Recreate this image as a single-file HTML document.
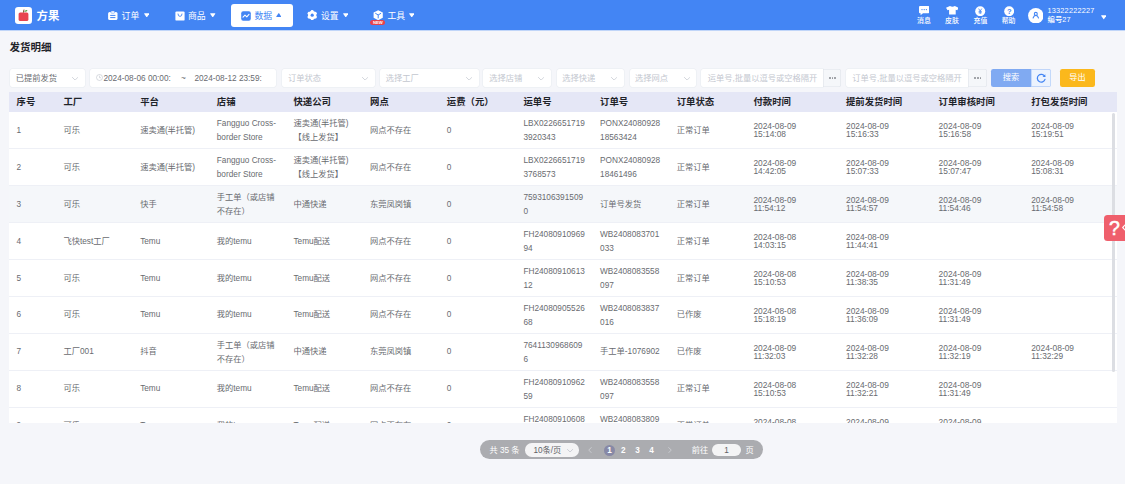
<!DOCTYPE html>
<html lang="zh-CN">
<head>
<meta charset="utf-8">
<title>发货明细</title>
<style>
*{box-sizing:border-box;margin:0;padding:0}
html,body{width:1125px;height:484px;overflow:hidden;background:#f5f6fa}
body{position:relative;font-family:"Liberation Sans","Noto Sans CJK SC",sans-serif;color:#606266;font-size:8.2px}
.abs{position:absolute;white-space:nowrap}
#hdr{position:absolute;left:0;top:0;width:1125px;height:31px;background:#4385f4;border-bottom:1px solid #c0d5f8}
.nav{position:absolute;top:10.8px;font-weight:400;height:11px;line-height:11px;font-size:8.8px;color:#fff;white-space:nowrap}
.nav.act{color:#4385f4}
.tri{position:absolute;top:13px;width:5.5px;height:4.4px}
#tab{position:absolute;left:231px;top:3.5px;width:62px;height:23.2px;background:#fff;border-radius:3px}
.ric{position:absolute;top:16.5px;font-weight:500;height:8px;line-height:8px;font-size:6.9px;color:#fff;white-space:nowrap;text-align:center}
.usr{position:absolute;left:1047.5px;font-size:7px;line-height:8px;color:#fff;white-space:nowrap}
#title{position:absolute;left:9.4px;top:40.5px;font-size:10.5px;line-height:13px;font-weight:bold;color:#1f2329;white-space:nowrap}
.inp{position:absolute;top:69px;height:18px;background:#fff;box-shadow:0 0 0 0.5px #e8ebf0;border-radius:2.3px}
.ft{position:absolute;top:69.2px;height:17.8px;line-height:19.2px;font-size:8.25px;color:#c3c7cf;white-space:nowrap}
.ft.v{color:#696b70}
.chev{position:absolute;top:76.6px;width:6.2px;height:3.6px}
.more{position:absolute;top:69px;height:18px;background:#f5f7fa;box-shadow:inset 0 0 0 0.6px #dfe3ea;border-radius:0 2.3px 2.3px 0}
.more i{position:absolute;top:8.2px;width:1.6px;height:1.6px;border-radius:50%;background:#909399}
.btn{position:absolute;top:69px;height:18px;line-height:18.6px;font-size:8.2px;color:#fff;text-align:center;white-space:nowrap}
.tbl{position:absolute;left:9.4px;top:92.2px;width:1107.8px;height:330.8px;overflow:hidden;background:#fff}
table{border-collapse:collapse;table-layout:fixed;width:1107.8px}
th{height:19.35px;background:#e5e7f6;color:#1f2329;font-size:9.4px;font-weight:bold;text-align:left;padding:0 0 0 7.2px;white-space:nowrap;line-height:12px;vertical-align:middle}
td{height:36.94px;padding:1.2px 0 0 7.2px;font-size:8.25px;line-height:13.6px;color:#696b70;vertical-align:middle;white-space:nowrap;border-bottom:0.6px solid #eef0f6}
.l2{position:relative;top:0.8px}
td.dt{line-height:8.35px;font-size:8.4px;padding-top:1.0px}
tr.hl td{background:#f5f7fa}
#sbt{position:absolute;left:1112.3px;top:113.2px;width:3.1px;height:258.8px;background:#dcdee3;border-radius:1.6px}
#pg{position:absolute;left:480.3px;top:440.4px;width:282.4px;height:18.9px;border-radius:9.45px;background:#abacb0;color:#fff;font-size:8.2px;line-height:19.6px}
#pg span{position:absolute;top:0.8px;white-space:nowrap}
#help{position:absolute;left:1104.4px;top:214.6px;width:24px;height:26px;background:#ef5f6c;border-radius:3.5px 0 0 3.5px}
</style>
</head>
<body>
<div id="hdr">
  <!-- logo -->
  <svg class="abs" style="left:14.5px;top:6.6px" width="17" height="17" viewBox="0 0 17 17"><rect width="17" height="17" rx="3.2" fill="#fff"/><rect x="3.6" y="5.4" width="9.8" height="8.6" rx="1.6" fill="#e8454f"/><path d="M8.4 5.6 L9 2.6" stroke="#7a4a2a" stroke-width="1" fill="none"/><path d="M9 4.6 Q10.6 2.4 12.6 3.2 Q11.4 5.2 9 4.6Z" fill="#5aa845"/></svg>
  <div class="abs" style="left:36.4px;top:8.6px;font-size:11.4px;line-height:14px;font-weight:bold;color:#fff;letter-spacing:0.3px">方果</div>

  <!-- 订单 -->
  <svg class="abs" style="left:108.2px;top:10.8px" width="9.6" height="9" viewBox="0 0 9.6 9"><rect x="0.1" y="1" width="9.4" height="8" rx="1.5" fill="#fff"/><rect x="2.9" y="0" width="3.8" height="2.2" rx="0.8" fill="#fff" stroke="#4385f4" stroke-width="0.5"/><rect x="2.2" y="3.9" width="5.2" height="1" fill="#4385f4"/><rect x="2.2" y="6.1" width="5.2" height="1" fill="#4385f4"/></svg>
  <div class="nav" style="left:121.6px">订单</div><svg class="tri" style="left:143.8px" viewBox="0 0 5.2 3.8" preserveAspectRatio="none"><path d="M0.5 0.3 H4.7 Q5.2 0.3 4.9 0.8 L2.9 3.5 Q2.6 3.8 2.3 3.5 L0.3 0.8 Q0 0.3 0.5 0.3Z" fill="#fff"/></svg>
  <!-- 商品 -->
  <svg class="abs" style="left:174.6px;top:10.8px" width="10" height="10" viewBox="0 0 10 10"><rect x="0.4" y="0.4" width="9.2" height="9.2" rx="1.2" fill="#fff"/><path d="M3 2.6 Q3 5.4 5 5.4 Q7 5.4 7 2.6" stroke="#4385f4" stroke-width="0.9" fill="none"/></svg>
  <div class="nav" style="left:188px">商品</div><svg class="tri" style="left:210px" viewBox="0 0 5.2 3.8" preserveAspectRatio="none"><path d="M0.5 0.3 H4.7 Q5.2 0.3 4.9 0.8 L2.9 3.5 Q2.6 3.8 2.3 3.5 L0.3 0.8 Q0 0.3 0.5 0.3Z" fill="#fff"/></svg>
  <!-- 数据 -->
  <div id="tab"></div>
  <svg class="abs" style="left:240.8px;top:10.7px" width="10" height="10" viewBox="0 0 10 10"><rect x="0.2" y="0.2" width="9.6" height="9.6" rx="2" fill="#4385f4"/><path d="M2 6.2 L4 4.2 L5.8 5.8 L8 3.4" stroke="#fff" stroke-width="1.1" fill="none" stroke-linecap="round" stroke-linejoin="round"/></svg>
  <div class="nav act" style="left:254.5px">数据</div><svg class="tri" style="left:275.6px;top:12.6px" viewBox="0 0 5.2 3.8" preserveAspectRatio="none"><path d="M0.5 3.5 H4.7 Q5.2 3.5 4.9 3 L2.9 0.3 Q2.6 0 2.3 0.3 L0.3 3 Q0 3.5 0.5 3.5Z" fill="#4385f4"/></svg>
  <!-- 设置 -->
  <svg class="abs" style="left:306.6px;top:10px" width="10.4" height="10.4" viewBox="0 0 10.4 10.4"><circle cx="5.2" cy="5.2" r="4.1" fill="#fff"/><g fill="#fff"><rect x="3.8" y="0.1" width="2.8" height="10.2" rx="1.1" transform="rotate(0 5.2 5.2)"/><rect x="3.8" y="0.1" width="2.8" height="10.2" rx="1.1" transform="rotate(60 5.2 5.2)"/><rect x="3.8" y="0.1" width="2.8" height="10.2" rx="1.1" transform="rotate(120 5.2 5.2)"/></g><circle cx="5.2" cy="5.2" r="1.6" fill="#4385f4"/></svg>
  <div class="nav" style="left:320.9px">设置</div><svg class="tri" style="left:342.8px" viewBox="0 0 5.2 3.8" preserveAspectRatio="none"><path d="M0.5 0.3 H4.7 Q5.2 0.3 4.9 0.8 L2.9 3.5 Q2.6 3.8 2.3 3.5 L0.3 0.8 Q0 0.3 0.5 0.3Z" fill="#fff"/></svg>
  <!-- 工具 -->
  <svg class="abs" style="left:372.8px;top:9.6px" width="10.4" height="10.4" viewBox="0 0 10.4 10.4"><path d="M5.2 0.2 L9.8 2.6 L9.8 7.8 L5.2 10.2 L0.6 7.8 L0.6 2.6Z" fill="#fff"/><path d="M2.6 3.4 L5.2 5 L7.8 3.4 M5.2 5 L5.2 8" stroke="#4385f4" stroke-width="1" fill="none" stroke-linecap="round"/></svg>
  <div class="abs" style="left:370.4px;top:19.6px;width:14.9px;height:5.8px;border-radius:2.9px;background:#e8404a;color:#fff;font-size:4.2px;line-height:5.8px;text-align:center;font-weight:bold">NEW</div>
  <div class="nav" style="left:387.5px">工具</div><svg class="tri" style="left:408.8px" viewBox="0 0 5.2 3.8" preserveAspectRatio="none"><path d="M0.5 0.3 H4.7 Q5.2 0.3 4.9 0.8 L2.9 3.5 Q2.6 3.8 2.3 3.5 L0.3 0.8 Q0 0.3 0.5 0.3Z" fill="#fff"/></svg>

  <!-- right icons -->
  <svg class="abs" style="left:919px;top:6.2px" width="10.4" height="9.4" viewBox="0 0 10.4 9.4"><path d="M1 0 H9.4 Q10.4 0 10.4 1 V6.2 Q10.4 7.2 9.4 7.2 H4 L1.6 9.2 V7.2 H1 Q0 7.2 0 6.2 V1 Q0 0 1 0Z" fill="#fff"/><circle cx="3" cy="3.6" r="0.7" fill="#4385f4"/><circle cx="5.2" cy="3.6" r="0.7" fill="#4385f4"/><circle cx="7.4" cy="3.6" r="0.7" fill="#4385f4"/></svg>
  <div class="ric" style="left:914px;width:20px">消息</div>
  <svg class="abs" style="left:945.7px;top:6.3px" width="12.8" height="8.6" viewBox="0 0 11.6 9.4" preserveAspectRatio="none"><path d="M3.6 0 Q5.8 1.6 8 0 L11.6 2 L10.2 4.6 L8.8 4 V9.4 H2.8 V4 L1.4 4.6 L0 2Z" fill="#fff"/></svg>
  <div class="ric" style="left:942px;width:20px">皮肤</div>
  <svg class="abs" style="left:975.2px;top:5.8px" width="10.4" height="10.4" viewBox="0 0 10.4 10.4"><circle cx="5.2" cy="5.2" r="5" fill="#fff"/><path d="M3.6 2.6 L5.2 5 L6.8 2.6 M5.2 5 V8 M3.6 5.4 H6.8 M3.6 6.8 H6.8" stroke="#4385f4" stroke-width="0.8" fill="none"/></svg>
  <div class="ric" style="left:970.4px;width:20px">充值</div>
  <svg class="abs" style="left:1003.6px;top:5.8px" width="10.4" height="10.4" viewBox="0 0 10.4 10.4"><circle cx="5.2" cy="5.2" r="5" fill="#fff"/><text x="5.2" y="8" font-size="7.6" font-weight="bold" fill="#4385f4" text-anchor="middle" font-family="Liberation Sans, sans-serif">?</text></svg>
  <div class="ric" style="left:998.6px;width:20px">帮助</div>
  <!-- avatar -->
  <svg class="abs" style="left:1027.6px;top:7.8px" width="15.6" height="15.6" viewBox="0 0 15.6 15.6"><circle cx="7.8" cy="7.8" r="7.75" fill="#fff"/><circle cx="7.8" cy="5.9" r="1.5" fill="none" stroke="#4385f4" stroke-width="1.05"/><path d="M5.1 10 Q5.9 7.4 7.8 7.4 Q9.7 7.4 10.5 10" fill="none" stroke="#4385f4" stroke-width="1.05" stroke-linecap="round"/></svg>
  <div class="usr" style="top:6.9px;font-size:7.3px;letter-spacing:0.22px">13322222227</div>
  <div class="usr" style="top:15.4px;font-size:7.4px;line-height:9px;font-weight:500">编号27</div>
  <svg class="tri" style="left:1100.8px;top:15.2px" viewBox="0 0 5.2 3.8" preserveAspectRatio="none"><path d="M0.5 0.3 H4.7 Q5.2 0.3 4.9 0.8 L2.9 3.5 Q2.6 3.8 2.3 3.5 L0.3 0.8 Q0 0.3 0.5 0.3Z" fill="#fff"/></svg>
</div>

<div id="title">发货明细</div>

<!-- filters -->
<div class="inp" style="left:9.6px;width:75.7px"></div>
<div class="inp" style="left:89.9px;width:186.6px"></div>
<div class="inp" style="left:281.5px;width:93.7px"></div>
<div class="inp" style="left:380.2px;width:98.5px"></div>
<div class="inp" style="left:483.3px;width:68.1px"></div>
<div class="inp" style="left:556.8px;width:67.4px"></div>
<div class="inp" style="left:629.7px;width:66.6px"></div>
<div class="inp" style="left:701.3px;width:121.6px;border-radius:2.3px 0 0 2.3px"></div>
<div class="inp" style="left:846px;width:122.3px;border-radius:2.3px 0 0 2.3px"></div>
<div class="ft v" style="left:15.8px">已提前发货</div>
<svg class="abs" style="left:96px;top:74.4px" width="7" height="7" viewBox="0 0 7 7"><circle cx="3.5" cy="3.5" r="3" fill="none" stroke="#c0c4cc" stroke-width="0.6"/><path d="M3.5 1.7 V3.7 H5" fill="none" stroke="#c0c4cc" stroke-width="0.6"/></svg>
<div class="ft v" style="left:103.4px">2024-08-06 00:00:</div>
<div class="ft v" style="left:181px">~</div>
<div class="ft v" style="left:194.4px">2024-08-12 23:59:</div>
<div class="ft" style="left:288px">订单状态</div>
<div class="ft" style="left:385.7px">选择工厂</div>
<div class="ft" style="left:489.2px">选择店铺</div>
<div class="ft" style="left:562.2px">选择快递</div>
<div class="ft" style="left:635.1px">选择网点</div>
<div class="ft" style="left:707.8px">运单号,批量以逗号或空格隔开</div>
<div class="ft" style="left:852.2px">订单号,批量以逗号或空格隔开</div>
<svg class="chev" style="left:72px" viewBox="0 0 6.2 3.6"><path d="M0.4 0.4 L3.1 3.1 L5.8 0.4" fill="none" stroke="#c0c4cc" stroke-width="0.7" stroke-linecap="round" stroke-linejoin="round"/></svg>
<svg class="chev" style="left:362px" viewBox="0 0 6.2 3.6"><path d="M0.4 0.4 L3.1 3.1 L5.8 0.4" fill="none" stroke="#c0c4cc" stroke-width="0.7" stroke-linecap="round" stroke-linejoin="round"/></svg>
<svg class="chev" style="left:465.5px" viewBox="0 0 6.2 3.6"><path d="M0.4 0.4 L3.1 3.1 L5.8 0.4" fill="none" stroke="#c0c4cc" stroke-width="0.7" stroke-linecap="round" stroke-linejoin="round"/></svg>
<svg class="chev" style="left:538px" viewBox="0 0 6.2 3.6"><path d="M0.4 0.4 L3.1 3.1 L5.8 0.4" fill="none" stroke="#c0c4cc" stroke-width="0.7" stroke-linecap="round" stroke-linejoin="round"/></svg>
<svg class="chev" style="left:610.9px" viewBox="0 0 6.2 3.6"><path d="M0.4 0.4 L3.1 3.1 L5.8 0.4" fill="none" stroke="#c0c4cc" stroke-width="0.7" stroke-linecap="round" stroke-linejoin="round"/></svg>
<svg class="chev" style="left:683.5px" viewBox="0 0 6.2 3.6"><path d="M0.4 0.4 L3.1 3.1 L5.8 0.4" fill="none" stroke="#c0c4cc" stroke-width="0.7" stroke-linecap="round" stroke-linejoin="round"/></svg>
<div class="more" style="left:822.9px;width:18.5px"><i style="left:6.2px"></i><i style="left:8.9px"></i><i style="left:11.6px"></i></div>
<div class="more" style="left:968.3px;width:18.3px"><i style="left:6.2px"></i><i style="left:8.9px"></i><i style="left:11.6px"></i></div>
<div class="btn" style="left:990.9px;width:40.1px;background:#80aaf2;border-radius:2.3px 0 0 2.3px">搜索</div>
<div class="btn" style="left:1031px;width:20px;background:#ecf3fe;box-shadow:inset 0 0 0 0.7px #b3cdf8;border-radius:0 2.3px 2.3px 0">
  <svg style="position:absolute;left:4.8px;top:3.8px" width="10.4" height="10.4" viewBox="0 0 10.4 10.4"><path d="M8.7 3.4 A3.9 3.9 0 1 0 9 6.4" fill="none" stroke="#4385f4" stroke-width="1.25" stroke-linecap="round"/><path d="M9.3 1.2 V3.9 H6.6Z" fill="#4385f4"/></svg>
</div>
<div class="btn" style="left:1060px;width:35.1px;background:#fbb81c;border-radius:2.3px">导出</div>
<div class="tbl">
<table>
<colgroup><col style="width:46.9px"><col style="width:76.66px"><col style="width:76.66px"><col style="width:76.66px"><col style="width:76.66px"><col style="width:76.66px"><col style="width:76.66px"><col style="width:76.66px"><col style="width:76.66px"><col style="width:76.66px"><col style="width:92.6px"><col style="width:92.6px"><col style="width:92.6px"><col style="width:93.2px"></colgroup>
<thead><tr><th>序号</th><th>工厂</th><th>平台</th><th>店铺</th><th>快递公司</th><th>网点</th><th>运费（元）</th><th>运单号</th><th>订单号</th><th>订单状态</th><th>付款时间</th><th>提前发货时间</th><th>订单审核时间</th><th>打包发货时间</th></tr></thead>
<tbody>
<tr><td>1</td><td>可乐</td><td>速卖通(半托管)</td><td>Fangguo Cross-<br><span class="l2">border Store</span></td><td>速卖通(半托管)<br><span class="l2">【线上发货】</span></td><td>网点不存在</td><td>0</td><td>LBX0226651719<br><span class="l2">3920343</span></td><td>PONX24080928<br><span class="l2">18563424</span></td><td>正常订单</td><td class="dt">2024-08-09<br>15:14:08</td><td class="dt">2024-08-09<br>15:16:33</td><td class="dt">2024-08-09<br>15:16:58</td><td class="dt">2024-08-09<br>15:19:51</td></tr>
<tr><td>2</td><td>可乐</td><td>速卖通(半托管)</td><td>Fangguo Cross-<br><span class="l2">border Store</span></td><td>速卖通(半托管)<br><span class="l2">【线上发货】</span></td><td>网点不存在</td><td>0</td><td>LBX0226651719<br><span class="l2">3768573</span></td><td>PONX24080928<br><span class="l2">18461496</span></td><td>正常订单</td><td class="dt">2024-08-09<br>14:42:05</td><td class="dt">2024-08-09<br>15:07:33</td><td class="dt">2024-08-09<br>15:07:47</td><td class="dt">2024-08-09<br>15:08:31</td></tr>
<tr class="hl"><td>3</td><td>可乐</td><td>快手</td><td>手工单（或店铺<br><span class="l2">不存在）</span></td><td>中通快递</td><td>东莞凤岗镇</td><td>0</td><td>7593106391509<br><span class="l2">0</span></td><td>订单号发货</td><td>正常订单</td><td class="dt">2024-08-09<br>11:54:12</td><td class="dt">2024-08-09<br>11:54:57</td><td class="dt">2024-08-09<br>11:54:46</td><td class="dt">2024-08-09<br>11:54:58</td></tr>
<tr><td>4</td><td>飞快test工厂</td><td>Temu</td><td>我的temu</td><td>Temu配送</td><td>网点不存在</td><td>0</td><td>FH24080910969<br><span class="l2">94</span></td><td>WB2408083701<br><span class="l2">033</span></td><td>正常订单</td><td class="dt">2024-08-08<br>14:03:15</td><td class="dt">2024-08-09<br>11:44:41</td><td class="dt"></td><td class="dt"></td></tr>
<tr><td>5</td><td>可乐</td><td>Temu</td><td>我的temu</td><td>Temu配送</td><td>网点不存在</td><td>0</td><td>FH24080910613<br><span class="l2">12</span></td><td>WB2408083558<br><span class="l2">097</span></td><td>正常订单</td><td class="dt">2024-08-08<br>15:10:53</td><td class="dt">2024-08-09<br>11:38:35</td><td class="dt">2024-08-09<br>11:31:49</td><td class="dt"></td></tr>
<tr><td>6</td><td>可乐</td><td>Temu</td><td>我的temu</td><td>Temu配送</td><td>网点不存在</td><td>0</td><td>FH24080905526<br><span class="l2">68</span></td><td>WB2408083837<br><span class="l2">016</span></td><td>已作废</td><td class="dt">2024-08-08<br>15:18:19</td><td class="dt">2024-08-09<br>11:36:09</td><td class="dt">2024-08-09<br>11:31:49</td><td class="dt"></td></tr>
<tr><td>7</td><td>工厂001</td><td>抖音</td><td>手工单（或店铺<br><span class="l2">不存在）</span></td><td>中通快递</td><td>东莞凤岗镇</td><td>0</td><td>7641130968609<br><span class="l2">6</span></td><td>手工单-1076902</td><td>已作废</td><td class="dt">2024-08-09<br>11:32:03</td><td class="dt">2024-08-09<br>11:32:28</td><td class="dt">2024-08-09<br>11:32:19</td><td class="dt">2024-08-09<br>11:32:29</td></tr>
<tr><td>8</td><td>可乐</td><td>Temu</td><td>我的temu</td><td>Temu配送</td><td>网点不存在</td><td>0</td><td>FH24080910962<br><span class="l2">59</span></td><td>WB2408083558<br><span class="l2">097</span></td><td>正常订单</td><td class="dt">2024-08-08<br>15:10:53</td><td class="dt">2024-08-09<br>11:32:21</td><td class="dt">2024-08-09<br>11:31:49</td><td class="dt"></td></tr>
<tr><td>9</td><td>可乐</td><td>Temu</td><td>我的temu</td><td>Temu配送</td><td>网点不存在</td><td>0</td><td>FH24080910608<br><span class="l2">31</span></td><td>WB2408083809<br><span class="l2">052</span></td><td>正常订单</td><td class="dt">2024-08-08<br>15:20:11</td><td class="dt">2024-08-09<br>11:30:02</td><td class="dt">2024-08-09<br>11:31:49</td><td class="dt"></td></tr>
</tbody>
</table>
</div>
<div id="sbt"></div>
<div id="help">
  <div class="abs" style="left:4.6px;top:3.4px;font-size:19.5px;line-height:20px;color:#fff;-webkit-text-stroke:0.5px #fff">?</div>
  <svg class="abs" style="left:17.6px;top:9.4px" width="4" height="7" viewBox="0 0 4 7"><path d="M3.5 0.5 L0.7 3.5 L3.5 6.5" fill="none" stroke="#fff" stroke-width="1.1" stroke-linecap="round" stroke-linejoin="round"/></svg>
</div>
<div id="pg">
  <span style="left:9.2px">共 35 条</span>
  <div class="abs" style="left:44.7px;top:2.7px;width:54px;height:13.6px;border-radius:6.8px;background:#f4f4f5"></div>
  <span style="left:53.2px;color:#606266">10条/页</span>
  <svg class="abs" style="left:87px;top:8.4px" width="6.1" height="3.5" viewBox="0 0 6.2 3.6"><path d="M0.4 0.4 L3.1 3.1 L5.8 0.4" fill="none" stroke="#c0c4cc" stroke-width="0.8" stroke-linecap="round" stroke-linejoin="round"/></svg>
  <svg class="abs" style="left:108px;top:6.9px" width="4" height="6.2" viewBox="0 0 4 6.2"><path d="M3.4 0.5 L0.7 3.1 L3.4 5.7" fill="none" stroke="#cdced2" stroke-width="0.9" stroke-linecap="round" stroke-linejoin="round"/></svg>
  <div class="abs" style="left:123.6px;top:4.3px;width:11.2px;height:11.2px;border-radius:50%;background:#8789a6"></div>
  <span style="left:126.9px;font-weight:bold">1</span>
  <span style="left:140.6px;font-weight:bold">2</span>
  <span style="left:155px;font-weight:bold">3</span>
  <span style="left:169px;font-weight:bold">4</span>
  <svg class="abs" style="left:188px;top:6.9px" width="4" height="6.2" viewBox="0 0 4 6.2"><path d="M0.6 0.5 L3.3 3.1 L0.6 5.7" fill="none" stroke="#cdced2" stroke-width="0.9" stroke-linecap="round" stroke-linejoin="round"/></svg>
  <span style="left:211.5px">前往</span>
  <div class="abs" style="left:232px;top:3.2px;width:28.3px;height:12.8px;border-radius:6.4px;background:#f4f4f5"></div>
  <span style="left:244px;color:#606266">1</span>
  <span style="left:265.2px">页</span>
</div>
</body>
</html>
